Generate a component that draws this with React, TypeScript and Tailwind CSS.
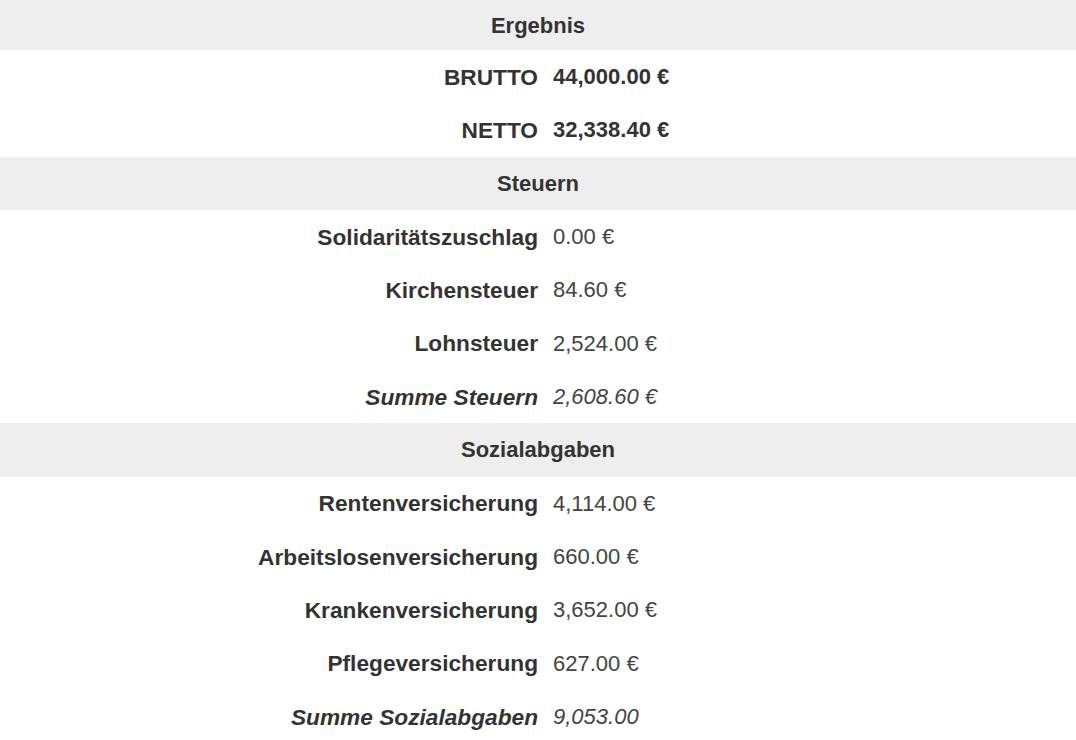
import React from "react";

type Row = { label: string; value: string; kind?: "bold" | "sum" | "normal" };

function Header({ title, first }: { title: string; first?: boolean }) {
  return (
    <div
      className={`${first ? "h-[50px]" : "h-[53.33px]"} bg-[#eeeeee] flex items-center justify-center font-bold text-[22px] text-[#333333]`}
    >
      {title}
    </div>
  );
}

function Line({ label, value, kind = "normal" }: Row) {
  const labelCls = kind === "sum" ? "font-bold italic" : "font-bold";
  const valueCls =
    kind === "bold"
      ? "font-bold text-[#333333]"
      : kind === "sum"
      ? "italic text-[#444444]"
      : "text-[#444444]";
  return (
    <div className="h-[53.33px] grid grid-cols-2 items-center">
      <div className={`text-right text-[22.7px] text-[#333333] ${labelCls}`}>{label}</div>
      <div className={`text-left text-[22px] pl-[15px] ${valueCls}`}>{value}</div>
    </div>
  );
}

export default function App() {
  return (
    <div
      className="w-[1076px] h-[740px] overflow-hidden bg-white"
      style={{ fontFamily: '"Liberation Sans", Arial, sans-serif' }}
    >
      <Header title="Ergebnis" first />
      <Line label="BRUTTO" value="44,000.00 €" kind="bold" />
      <Line label="NETTO" value="32,338.40 €" kind="bold" />
      <Header title="Steuern" />
      <Line label="Solidaritätszuschlag" value="0.00 €" />
      <Line label="Kirchensteuer" value="84.60 €" />
      <Line label="Lohnsteuer" value="2,524.00 €" />
      <Line label="Summe Steuern" value="2,608.60 €" kind="sum" />
      <Header title="Sozialabgaben" />
      <Line label="Rentenversicherung" value="4,114.00 €" />
      <Line label="Arbeitslosenversicherung" value="660.00 €" />
      <Line label="Krankenversicherung" value="3,652.00 €" />
      <Line label="Pflegeversicherung" value="627.00 €" />
      <Line label="Summe Sozialabgaben" value="9,053.00" kind="sum" />
    </div>
  );
}
